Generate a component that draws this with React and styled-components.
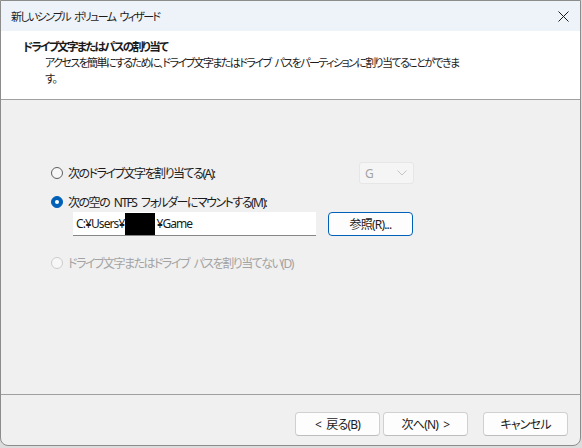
import React from "react"
import styled, { createGlobalStyle } from "styled-components"

const GlobalStyle = createGlobalStyle`
  html, body {
    margin: 0;
    padding: 0;
    background: #dcdcdc;
  }
  body {
    font-family: "Noto Sans", "Noto Sans CJK JP", sans-serif;
    font-size: 12px;
    color: #1b1b1b;
    font-feature-settings: "palt";
  }
`

const App = () => {
  return (
    <>
      <GlobalStyle />
      <Window>
        <TitleBar>
          <TitleText>新しいシンプル ボリューム ウィザード</TitleText>
          <CloseButton aria-label="close">
            <svg width="11" height="11" viewBox="0 0 11 11">
              <path d="M0.5 0.5 L10.5 10.5 M10.5 0.5 L0.5 10.5" stroke="#1b1b1b" strokeWidth="1" />
            </svg>
          </CloseButton>
        </TitleBar>

        <Header>
          <HeaderTitle>ドライブ文字またはパスの割り当て</HeaderTitle>
          <HeaderText>
            アクセスを簡単にするために、ドライブ文字またはドライブ パスをパーティションに割り当てることができます。
          </HeaderText>
        </Header>

        <Body>
          <OptionGroup>
            <OptionRow>
              <RadioLabel>
                <Radio />
                次のドライブ文字を割り当てる(A):
              </RadioLabel>
              <Dropdown>
                <span>G</span>
                <svg width="10" height="6" viewBox="0 0 10 6">
                  <path d="M0.5 0.5 L5 5 L9.5 0.5" fill="none" stroke="#c4c4c4" strokeWidth="1" />
                </svg>
              </Dropdown>
            </OptionRow>

            <OptionRow $tight>
              <RadioLabel>
                <Radio $checked />
                次の空の NTFS フォルダーにマウントする(M):
              </RadioLabel>
            </OptionRow>

            <PathRow>
              <PathInput>
                C:¥Users¥<Redacted />¥Game
              </PathInput>
              <Button $primary>参照(R)...</Button>
            </PathRow>

            <OptionRow $spaced>
              <RadioLabel $disabled>
                <Radio $disabled />
                ドライブ文字またはドライブ パスを割り当てない(D)
              </RadioLabel>
            </OptionRow>
          </OptionGroup>
        </Body>

        <Footer>
          <ButtonPair>
            <Button>&lt; 戻る(B)</Button>
            <Button>次へ(N) &gt;</Button>
          </ButtonPair>
          <Button>キャンセル</Button>
        </Footer>
      </Window>
    </>
  )
}

const Window = styled.div`
  width: 579px;
  height: 444px;
  border: 1px solid #8c8c8c;
  border-radius: 0 0 8px 8px;
  background: #f0f0f0;
  display: flex;
  flex-direction: column;
  overflow: hidden;
`

const TitleBar = styled.div`
  height: 30px;
  background: #eef3f9;
  display: flex;
  align-items: center;
  justify-content: space-between;
  padding: 0 10px 0 10px;
  flex-shrink: 0;
`

const TitleText = styled.div`
  font-size: 11px;
  letter-spacing: -1.7px;
  word-spacing: 3px;
  color: #1b1b1b;
`

const CloseButton = styled.div`
  width: 11px;
  height: 11px;
  display: flex;
  margin-right: 1px;
`

const Header = styled.div`
  height: 69px;
  background: #ffffff;
  border-bottom: 1px solid #a0a0a0;
  padding: 8px 0 0 22px;
  box-sizing: border-box;
  flex-shrink: 0;
`

const HeaderTitle = styled.div`
  font-weight: bold;
  font-size: 11.5px;
  line-height: 16px;
  letter-spacing: -1.8px;
`

const HeaderText = styled.div`
  margin-left: 22px;
  width: 415px;
  line-height: 16px;
  font-size: 11px;
  letter-spacing: -1.6px;
  word-spacing: 3px;
`

const Body = styled.div`
  flex: 1;
  padding: 62px 0 0 50px;
  border-bottom: 1px solid #a0a0a0;
`

const OptionGroup = styled.div`
  width: 363px;
  display: flex;
  flex-direction: column;
`

const OptionRow = styled.div`
  display: flex;
  align-items: center;
  justify-content: space-between;
  height: ${({ $tight }) => ($tight ? "16px" : "22px")};
  margin-top: ${({ $tight, $spaced }) => ($tight ? "10px" : $spaced ? "16px" : "0")};
`

const RadioLabel = styled.label`
  display: flex;
  align-items: center;
  gap: 5px;
  letter-spacing: -1.5px;
  word-spacing: 3px;
  color: ${({ $disabled }) => ($disabled ? "#a3a3a3" : "#1b1b1b")};
  white-space: nowrap;
`

const Radio = styled.span`
  width: 10px;
  height: 10px;
  border-radius: 50%;
  box-sizing: content-box;
  flex-shrink: 0;
  border: 1px solid
    ${({ $checked, $disabled }) => ($checked ? "#005fb8" : $disabled ? "#cccccc" : "#5f5f5f")};
  background: ${({ $checked }) => ($checked ? "#005fb8" : "#f7f7f7")};
  position: relative;

  &::after {
    content: "";
    display: ${({ $checked }) => ($checked ? "block" : "none")};
    position: absolute;
    left: 3px;
    top: 3px;
    width: 4px;
    height: 4px;
    border-radius: 50%;
    background: #ffffff;
  }
`

const Dropdown = styled.div`
  width: 55px;
  height: 22px;
  box-sizing: border-box;
  border: 1px solid #e6e6e6;
  border-radius: 3px;
  background: #f5f5f5;
  color: #a3a3a3;
  display: flex;
  align-items: center;
  justify-content: space-between;
  padding: 0 6px 0 5px;
`

const PathRow = styled.div`
  display: flex;
  align-items: center;
  gap: 12px;
  margin: 2px 0 0 22px;
`

const PathInput = styled.div`
  width: 243px;
  height: 24px;
  box-sizing: border-box;
  background: #ffffff;
  border-bottom: 1px solid #868686;
  display: flex;
  align-items: center;
  padding-left: 3px;
  letter-spacing: -0.9px;
`

const Redacted = styled.span`
  display: inline-block;
  width: 30px;
  height: 22px;
  margin: 0 1px;
  background: #000000;
`

const Footer = styled.div`
  height: 50px;
  display: flex;
  align-items: flex-start;
  justify-content: flex-end;
  gap: 15px;
  padding: 17px 12px 0 0;
  box-sizing: border-box;
`

const ButtonPair = styled.div`
  display: flex;
  gap: 3px;
`

const Button = styled.div`
  width: 85px;
  height: 24px;
  box-sizing: border-box;
  display: flex;
  align-items: center;
  justify-content: center;
  letter-spacing: -0.8px;
  word-spacing: 3px;
  background: #fdfdfd;
  border: 1px solid ${({ $primary }) => ($primary ? "#005fb8" : "#d0d0d0")};
  border-bottom-color: ${({ $primary }) => ($primary ? "#005fb8" : "#bdbdbd")};
  border-radius: 4px;
  color: #1b1b1b;
`

export default App
